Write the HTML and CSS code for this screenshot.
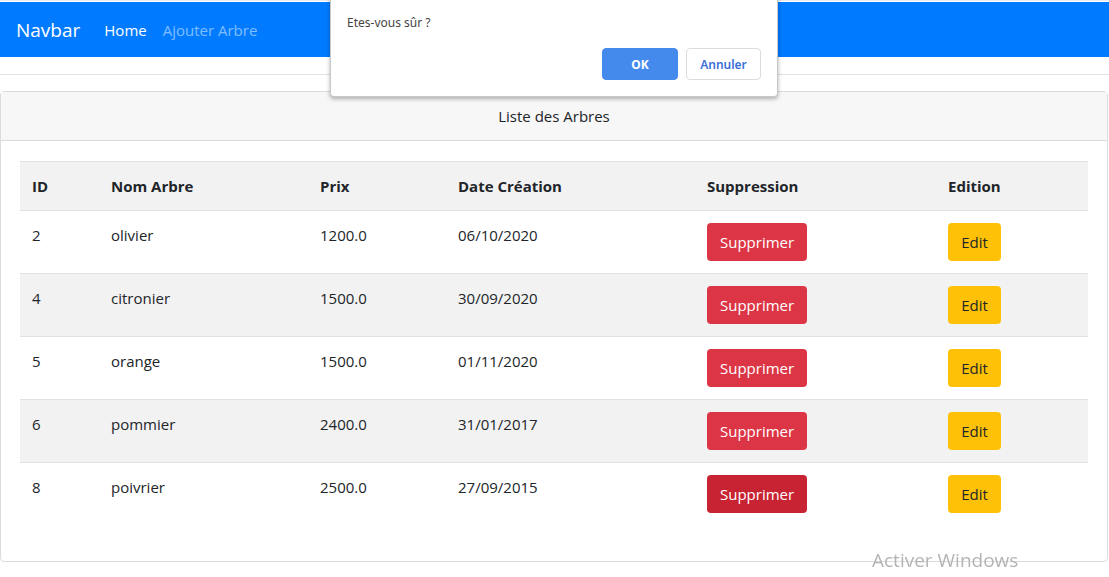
FILE: index.html
```html
<!DOCTYPE html>
<html lang="fr">
<head>
<meta charset="utf-8">
<title>Arbres</title>
<link rel="stylesheet" href="styles.css">
</head>
<body>
<nav class="navbar">
  <a class="brand">Navbar</a>
  <a class="nav-link active">Home</a>
  <a class="nav-link">Ajouter Arbre</a>
</nav>
<hr class="sep">
<div class="card">
  <div class="card-header">Liste des Arbres</div>
  <div class="card-body">
    <table class="table">
      <thead>
        <tr>
          <th class="c-id">ID</th>
          <th class="c-nom">Nom Arbre</th>
          <th class="c-prix">Prix</th>
          <th class="c-date">Date Création</th>
          <th class="c-sup">Suppression</th>
          <th class="c-ed">Edition</th>
        </tr>
      </thead>
      <tbody>
        <tr>
          <td>2</td><td>olivier</td><td>1200.0</td><td>06/10/2020</td>
          <td><button class="btn btn-danger">Supprimer</button></td>
          <td><button class="btn btn-warning">Edit</button></td>
        </tr>
        <tr>
          <td>4</td><td>citronier</td><td>1500.0</td><td>30/09/2020</td>
          <td><button class="btn btn-danger">Supprimer</button></td>
          <td><button class="btn btn-warning">Edit</button></td>
        </tr>
        <tr>
          <td>5</td><td>orange</td><td>1500.0</td><td>01/11/2020</td>
          <td><button class="btn btn-danger">Supprimer</button></td>
          <td><button class="btn btn-warning">Edit</button></td>
        </tr>
        <tr>
          <td>6</td><td>pommier</td><td>2400.0</td><td>31/01/2017</td>
          <td><button class="btn btn-danger">Supprimer</button></td>
          <td><button class="btn btn-warning">Edit</button></td>
        </tr>
        <tr>
          <td>8</td><td>poivrier</td><td>2500.0</td><td>27/09/2015</td>
          <td><button class="btn btn-danger hover">Supprimer</button></td>
          <td><button class="btn btn-warning">Edit</button></td>
        </tr>
      </tbody>
    </table>
  </div>
</div>

<div class="dialog">
  <div class="dialog-title">localhost:3000 indique</div>
  <div class="dialog-msg">Etes-vous sûr ?</div>
  <div class="dialog-actions">
    <button class="dbtn dbtn-ok">OK</button>
    <button class="dbtn dbtn-cancel">Annuler</button>
  </div>
</div>

<div class="watermark">Activer Windows</div>
</body>
</html>
```
FILE: styles.css
```css
* { box-sizing: border-box; }
html, body { margin: 0; padding: 0; }
body {
  font-family: "Open Sans", "Noto Sans", sans-serif;
  font-size: 15px;
  line-height: 24px;
  color: #212529;
  background: #fff;
  padding-top: 2px;
  border-top: 1px solid #ececec;
}
.navbar {
  height: 55px;
  background: #007bff;
  display: flex;
  align-items: center;
  padding: 0 16px;
  margin-top: -1px;
}
.brand {
  color: #fff;
  font-size: 19px;
  margin-right: 24px;
  line-height: 30px;
}
.nav-link {
  color: rgba(255,255,255,0.5);
  font-size: 15px;
  margin-right: 16px;
}
.nav-link.active { color: #fff; }
.sep {
  border: 0;
  border-top: 1px solid #e2e2e2;
  margin: 17px 0 16px 0;
}
.card {
  border: 1px solid #dcdcdc;
  border-radius: 4px;
  margin: 0 1px 0 0;
}
.card-header {
  background: #f7f7f7;
  border-bottom: 1px solid #dcdcdc;
  text-align: center;
  height: 49px;
  line-height: 48px;
}
.card-body {
  padding: 20px 19px 20px 19px;
}
.table {
  width: 100%;
  border-collapse: collapse;
  margin-bottom: 16px;
}
.table th, .table td {
  text-align: left;
  vertical-align: top;
  padding: 12px;
  border-top: 1px solid #dee2e6;
}
.table th {
  font-weight: 700;
  background: #f2f2f2;
  border-bottom: 1px solid #dee2e6;
  height: 49px;
}
.table tbody tr:nth-child(even) td { background: #f2f2f2; }
.c-id { width: 79px; }
.c-nom { width: 209px; }
.c-prix { width: 138px; }
.c-date { width: 249px; }
.c-sup { width: 241px; }
.btn {
  font-family: inherit;
  font-size: 15px;
  line-height: 24px;
  height: 38px;
  padding: 0 12px;
  border-radius: 4px;
  border: 1px solid transparent;
  cursor: pointer;
}
.btn-danger { background: #dc3545; color: #fff; width: 100px; }
.btn-danger.hover { background: #c82333; }
.btn-warning { background: #ffc107; color: #212529; width: 53px; }

.dialog {
  position: absolute;
  left: 330px;
  top: -12px;
  width: 448px;
  height: 109px;
  background: #fff;
  border: 1px solid #c8c8c8;
  border-top: 0;
  border-radius: 0 0 4px 4px;
  box-shadow: 0 2px 4px rgba(0,0,0,0.3);
  padding: 0 16px;
  font-family: "Noto Sans", "Open Sans", sans-serif;
}
.dialog-title {
  font-size: 14px;
  line-height: 16px;
  height: 16px;
  color: #d14a1e;
  margin-left: 68px;
  overflow: hidden;
  visibility: hidden;
}
.dialog-msg {
  font-size: 12px;
  color: #444;
  line-height: 16px;
  margin-top: 11px;
}
.dialog-actions {
  display: flex;
  justify-content: flex-end;
  gap: 8px;
  margin-top: 17px;
}
.dbtn {
  font-family: "Noto Sans", sans-serif;
  font-size: 12px;
  height: 32px;
  border-radius: 4px;
  cursor: pointer;
}
.dbtn-ok {
  width: 76px;
  background: #448aed;
  border: 1px solid #448aed;
  color: #fff;
  font-weight: 700;
}
.dbtn-cancel {
  width: 75px;
  background: #fff;
  border: 1px solid #dadce0;
  color: #3b6fd8;
  font-weight: 600;
}
.watermark {
  position: fixed;
  left: 872px;
  top: 548px;
  font-family: "Open Sans", sans-serif;
  font-size: 19px;
  color: #b4b4b4;
  white-space: nowrap;
}
```
